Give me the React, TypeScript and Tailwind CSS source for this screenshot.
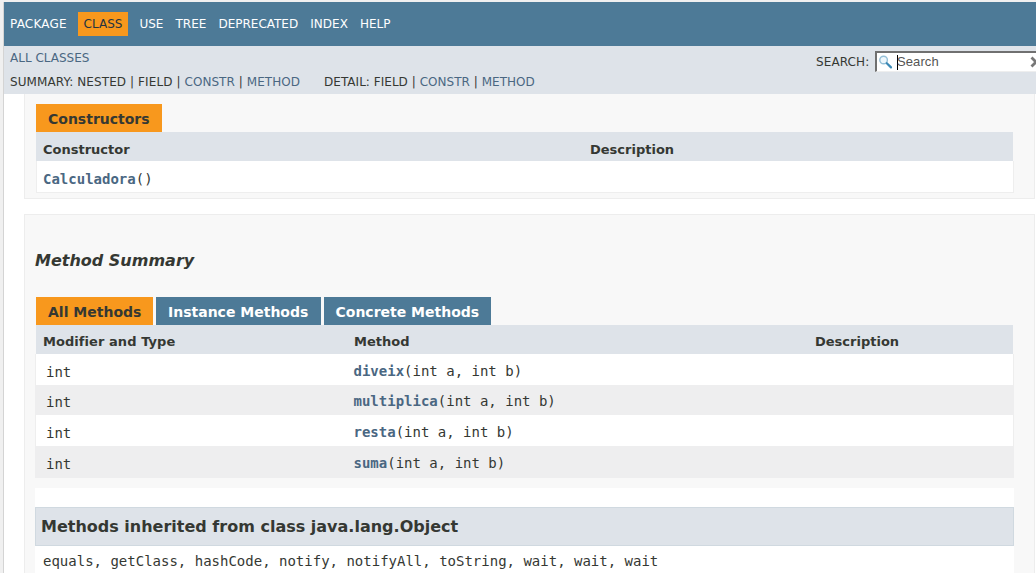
import type { ReactNode } from 'react';

const navAfter = ['USE', 'TREE', 'DEPRECATED', 'INDEX', 'HELP'];

const methods = [
  { name: 'diveix', row: 'h-[31px] pt-[7px] bg-white border-[#eeeeee]' },
  { name: 'multiplica', row: 'h-[30px] pt-[6px] bg-[#eeeeef] border-[#eeeeef]' },
  { name: 'resta', row: 'h-[31px] pt-[7px] bg-white border-[#eeeeee]' },
  { name: 'suma', row: 'h-[32px] pt-[7px] bg-[#eeeeef] border-[#eeeeef]' },
];

function Link({ children }: { children: ReactNode }) {
  return <a className="text-[#4a6782]">{children}</a>;
}

function Tab({ active, width, children }: { active?: boolean; width: string; children: ReactNode }) {
  return (
    <div
      className={`flex h-7 items-center pl-3 pt-[2px] text-[14px] font-bold ${width} ${
        active ? 'bg-[#f8981d] text-[#353833]' : 'bg-[#4d7a97] text-white'
      }`}
    >
      {children}
    </div>
  );
}

function NavBar() {
  return (
    <nav className="flex h-11 items-center bg-[#4d7a97] pl-[6px] text-[12px] text-white">
      <span className="w-[68px] tracking-[0.2px]">PACKAGE</span>
      <span className="mr-[11.4px] flex h-6 w-[50px] items-center justify-center bg-[#f8981d] text-[#253441]">
        CLASS
      </span>
      <div className="flex gap-[12.1px]">
        {navAfter.map((item) => (
          <span key={item}>{item}</span>
        ))}
      </div>
    </nav>
  );
}

function SubNav() {
  return (
    <div className="flex h-12 justify-between bg-[#dee3e9] pl-[6px] text-[12px] leading-[16px]">
      <div className="pt-[4px]">
        <div>
          <Link>ALL CLASSES</Link>
        </div>
        <div className="mt-2 flex gap-[25px] whitespace-pre tracking-[0.055px]">
          <div>
            <span className="tracking-[0.09px]">SUMMARY: NESTED | FIELD | </span>
            <Link>CONSTR</Link> | <Link>METHOD</Link>
          </div>
          <div className="-ml-px tracking-[0.03px]">
            DETAIL: FIELD | <Link>CONSTR</Link> | <Link>METHOD</Link>
          </div>
        </div>
      </div>
      <div className="flex w-[220px] items-start pt-[5px]">
        <span className="w-[59px] pt-[3px] tracking-[0.1px]">SEARCH:</span>
        <div className="flex h-[21px] w-[161px] items-center overflow-hidden border-b border-l-2 border-t-2 border-b-[#eeeeee] border-l-[#707070] border-t-[#707070] bg-white pl-[2px]">
          <svg width="14" height="14" viewBox="0 0 14 14" fill="none" className="shrink-0">
            <circle cx="4.6" cy="5" r="3.8" fill="#eef7fc" stroke="#94bfd7" strokeWidth="1.4" />
            <path d="M7.8 8.2l4.2 4.2" stroke="#3b88b5" strokeWidth="2.2" strokeLinecap="round" />
          </svg>
          <span className="ml-[4px] h-[15px] w-px shrink-0 bg-black" />
          <span className="-ml-px w-[133px] shrink-0 font-['Liberation_Sans',sans-serif] text-[13px] tracking-[0.1px] text-[#555555]">
            Search
          </span>
          <svg width="12" height="12" viewBox="0 0 12 12" className="shrink-0">
            <path d="M1.5 1.5l9 9M10.5 1.5l-9 9" stroke="#777777" strokeWidth="2.8" />
          </svg>
        </div>
      </div>
    </div>
  );
}

export default function App() {
  return (
    <div className="h-[573px] w-[1036px] overflow-hidden bg-[#f0f0f0] pl-[3px] pt-[2px] font-['DejaVu_Sans',sans-serif] text-[#353833]">
      <div className="h-full border-l border-[#d4d4d4] bg-white">
        <NavBar />
        <SubNav />
        <main className="ml-5 w-[1011px]">
          <section className="h-[105px] border-x border-b border-[#ededed] bg-[#f8f8f8] pl-[11px] pt-[10px]">
            <Tab active width="w-[126px]">Constructors</Tab>
            <div className="flex h-[29px] w-[977px] items-center bg-[#dee3e9] pl-[7px] pt-[6px] text-[13px] font-bold">
              <span className="w-[547px]">Constructor</span>
              <span>Description</span>
            </div>
            <div className="flex h-8 w-[978px] items-center border-x border-b border-[#eeeeee] bg-white pl-[6px] pt-[6px] font-['DejaVu_Sans_Mono',monospace] text-[14px]">
              <b className="text-[#4a6782]">Calculadora</b>()
            </div>
          </section>
          <section className="mt-[15px] h-[380px] border-x border-t border-[#ededed] bg-[#f8f8f8] pl-[10px]">
            <h3 className="h-[82px] pt-[34px] text-[16px] font-bold italic leading-6">Method Summary</h3>
            <div className="ml-px flex gap-[3px]">
              <Tab active width="w-[117px]">All Methods</Tab>
              <Tab width="w-[165px]">Instance Methods</Tab>
              <Tab width="w-[167px]">
                <span className="-ml-[0.5px]">Concrete Methods</span>
              </Tab>
            </div>
            <div className="ml-px flex h-[29px] w-[977px] items-center bg-[#dee3e9] pl-[7px] pt-[4px] text-[13px] font-bold">
              <span className="w-[311px] tracking-[0.06px]">Modifier and Type</span>
              <span className="w-[461px]">Method</span>
              <span>Description</span>
            </div>
            {methods.map((m) => (
              <div
                key={m.name}
                className={`flex w-[979px] items-start border-x pl-[10px] font-['DejaVu_Sans_Mono',monospace] text-[14px] leading-5 ${m.row}`}
              >
                <span className="w-[307.5px] pt-px">int</span>
                <span>
                  <b className="text-[#4a6782]">{m.name}</b>(int a, int b)
                </span>
              </div>
            ))}
            <div className="mt-[10px] h-[85px] w-[979px] bg-white pt-[19px]">
              <h4 className="flex h-[39px] items-center border border-[#d0d9e0] bg-[#dee3e9] pl-[5px] text-[16px] font-bold">
                Methods inherited from class java.lang.Object
              </h4>
              <div className="pl-2 pt-[5px] font-['DejaVu_Sans_Mono',monospace] text-[14px] leading-5">
                equals, getClass, hashCode, notify, notifyAll, toString, wait, wait, wait
              </div>
            </div>
          </section>
        </main>
      </div>
    </div>
  );
}
